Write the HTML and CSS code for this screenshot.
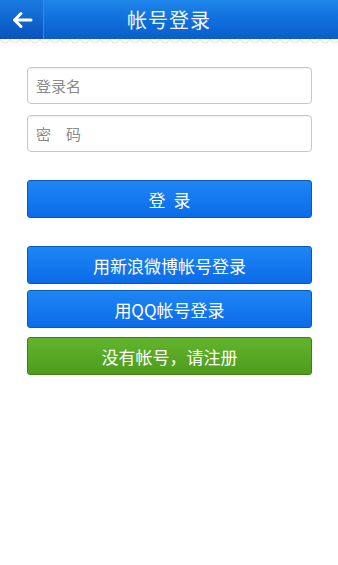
FILE: index.html
```html
<!DOCTYPE html>
<html lang="zh">
<head>
<meta charset="utf-8">
<link rel="stylesheet" href="styles.css">
</head>
<body>
<div class="app">
  <header class="topbar">
    <div class="back">
      <svg width="22" height="18" viewBox="0 0 22 18"><path d="M20 9H4M10 2.5L3.5 9L10 15.5" fill="none" stroke="#fff" stroke-width="3" stroke-linecap="round" stroke-linejoin="round"/></svg>
    </div>
    <h1 class="title">帐号登录</h1>
    <div class="spacer"></div>
  </header>
  <div class="edge"></div>
  <main class="form">
    <div class="field">登录名</div>
    <div class="field">密　码</div>
    <button class="btn blue login">登录</button>
    <div class="group">
      <button class="btn blue">用新浪微博帐号登录</button>
      <button class="btn blue">用QQ帐号登录</button>
      <button class="btn green">没有帐号，请注册</button>
    </div>
  </main>
</div>
</body>
</html>
```
FILE: styles.css
```css
* { box-sizing: border-box; }
html, body { margin: 0; padding: 0; background: #fff; }
body { font-family: "Noto Sans CJK SC", "Noto Sans", sans-serif; width: 338px; height: 565px; overflow: hidden; }
.topbar {
  height: 39px;
  display: flex;
  align-items: center;
  background: linear-gradient(#1f86ea 0%, #0f6fdc 50%, #0a5ec9 100%);
}
.back {
  width: 44px;
  height: 39px;
  display: flex;
  align-items: center;
  justify-content: center;
  background: linear-gradient(#1a7ae0, #0853bd);
  border-right: 1px solid #2f8cea;
}
.title {
  flex: 1;
  margin: 0;
  text-align: center;
  color: #f2f6fb;
  font-size: 20px;
  font-weight: normal;
  letter-spacing: 1px;
}
.spacer { width: 44px; }
.edge {
  height: 6px;
  background: radial-gradient(circle at 5px -1px, transparent 4px, #f3dcd5 4px, #f3dcd5 5px, transparent 5.5px) 0 0 / 10px 6px repeat-x;
  opacity: .8;
}
.form {
  padding: 22px 26px 0 27px;
  display: flex;
  flex-direction: column;
}
.field {
  height: 37px;
  border: 1px solid #c8c8c8;
  border-radius: 4px;
  margin-bottom: 11px;
  padding-left: 8px;
  display: flex;
  align-items: center;
  color: #8a8a8a;
  font-size: 15px;
  box-shadow: inset 0 1px 1px rgba(0,0,0,.06);
}
.btn {
  height: 38px;
  border-radius: 3px;
  color: #fff;
  font-family: inherit;
  font-size: 17px;
  width: 100%;
  padding: 0;
}
.blue {
  background: linear-gradient(#1d86f5, #0b6be8);
  border: 1px solid #0c57b8;
}
.green {
  background: linear-gradient(#62b42c, #4f9c1d);
  border: 1px solid #3f7f16;
}
.login { margin-top: 17px; letter-spacing: 8px; text-indent: 8px; }
.group {
  margin-top: 28px;
  display: flex;
  flex-direction: column;
  gap: 6px;
}
.group .green { margin-top: 3px; }
```
